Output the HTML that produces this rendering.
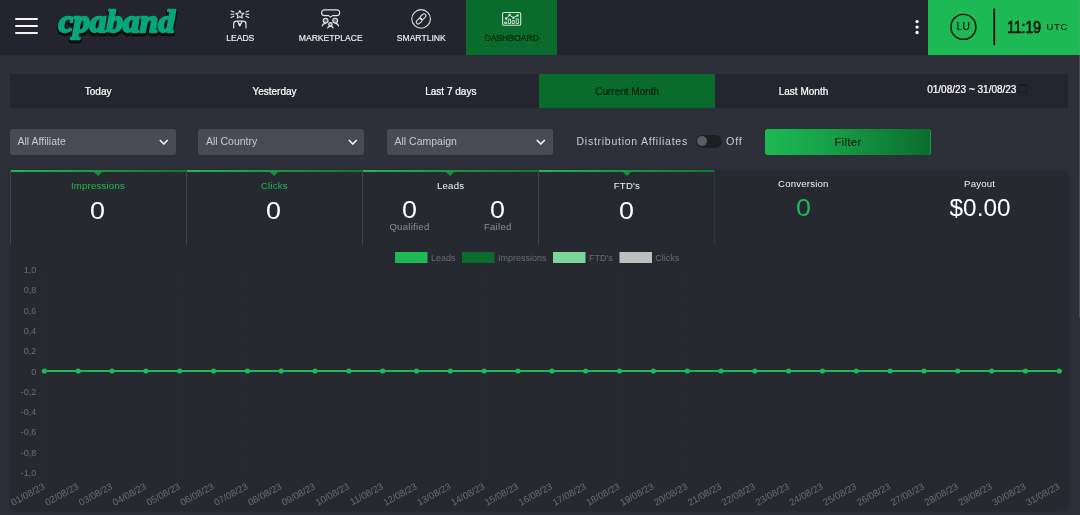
<!DOCTYPE html>
<html lang="en">
<head>
<meta charset="utf-8">
<title>cpaband - Dashboard</title>
<style>
*{box-sizing:border-box;margin:0;padding:0}
html,body{width:1080px;height:515px;overflow:hidden;background:#2e3039;font-family:"Liberation Sans",sans-serif;color:#fff}
#wrap{position:absolute;left:0;top:0;width:1080px;height:515px;overflow:hidden;will-change:transform}
#header{position:absolute;left:0;top:0;width:1080px;height:54.6px;background:#23242d}
.burger{position:absolute;left:15px;top:18px;width:23px;height:16px}
.burger i{position:absolute;left:0;width:23px;height:2px;background:#f2f2f2;border-radius:1px}
.logo{position:absolute;left:55px;top:1px;width:126px;height:50px;font-family:"Liberation Serif",serif;font-weight:bold;font-style:italic;font-size:34px;line-height:50px;color:#10a37f;letter-spacing:-0.5px;white-space:nowrap;-webkit-text-stroke:2.2px #10a37f;text-shadow:2px 2px 0 #0a0a0c,1px 1px 0 #0a0a0c}
.nav{position:absolute;top:0;height:54.6px;width:90.5px;text-align:center}
.nav svg{position:absolute;left:50%;top:8px;margin-left:-11px}
.nav span{position:absolute;left:-10px;right:-10px;top:32px;font-size:8.6px;line-height:12px;color:#f0f0f0;letter-spacing:0;-webkit-text-stroke:.15px currentColor}
.nav.act{background:#0a6c2c}
.nav.act span{color:#031c0a}
#user{position:absolute;left:928px;top:0;width:152px;height:54.6px;background:#1db954}
.av{position:absolute;left:22.2px;top:14.3px;width:26.6px;height:26.6px;font-size:10.3px;line-height:26.6px;letter-spacing:.3px;-webkit-text-stroke:.12px #0b0b0b;text-align:center;color:#0b0b0b}
.div{position:absolute;left:65.3px;top:8px;width:2px;height:37px;background:#0b0b0b}
.time{position:absolute;left:78.8px;top:14px;font-size:17.2px;line-height:26.6px;color:#0b0b0b;white-space:nowrap;letter-spacing:-.4px;-webkit-text-stroke:.45px #0b0b0b;transform:scaleX(.85);transform-origin:0 0}
.utc{position:absolute;left:118.6px;top:20px;font-size:9.6px;letter-spacing:.5px;line-height:14px;color:#0b0b0b;white-space:nowrap}
.dots{position:absolute;left:915px;top:20px;width:4px}
.dots i{display:block;width:3.4px;height:3.4px;border-radius:50%;background:#fff;margin-bottom:2px}

#tabs{position:absolute;left:10px;top:73.6px;width:1058px;height:34px;background:#24252e}
.tab{position:absolute;top:0;height:34px;width:176.33px;text-align:center;font-size:10px;line-height:35.2px;color:#fff;-webkit-text-stroke:.22px currentColor}
.tab.act{background:#0a6c2c;color:#03200c}

.sel{position:absolute;top:128.7px;height:26.3px;width:166px;background:#484b54;border-radius:3px;font-size:10.5px;line-height:25px;color:#c8c8cc;padding-left:7.5px}
.sel svg{position:absolute;right:6.8px;top:10.6px}
.lbl{position:absolute;left:576.5px;top:133px;font-size:10.5px;line-height:16px;color:#cbcbce;white-space:nowrap;letter-spacing:.74px}
.tog{position:absolute;left:696px;top:135px;width:26px;height:12.5px;border-radius:7px;background:#1d1e24}
.tog i{position:absolute;left:1px;top:1.2px;width:10px;height:10px;border-radius:50%;background:#5c5d63}
.off{position:absolute;left:726px;top:133px;font-size:10.8px;line-height:16px;color:#cbcbce;letter-spacing:.8px}
.btn{position:absolute;left:765px;top:129.2px;width:166px;height:25.8px;border-radius:3px;box-shadow:inset -1px 0 0 rgba(40,190,90,.55);background:linear-gradient(90deg,#1db954 0%,#17a348 35%,#0a6c2c 100%);text-align:center;font-size:10.6px;line-height:27.4px;color:#06200e;letter-spacing:.6px;-webkit-text-stroke:.15px #06200e}

#panel{position:absolute;left:9.8px;top:170px;width:1058.6px;height:339.6px;background:#272930;border-radius:5px;box-shadow:0 1px 5px rgba(0,0,0,.22)}
.card{position:absolute;top:0;height:75px;width:176.33px;text-align:center}
.card.g{border-top:2px solid #1db954}
.card.g:before{content:"";position:absolute;left:0;right:0;top:-2px;height:2px;background:linear-gradient(90deg,#1db954,#0c7a32)}
.card.g:after{content:"";position:absolute;left:50%;top:0;margin-left:-4.3px;border-left:4px solid transparent;border-right:4px solid transparent;border-top:4px solid #14913f}
.vl{position:absolute;top:0;width:1px;height:75px;background:#414247}
.ct{position:absolute;left:-20px;right:-20px;top:8.4px;font-size:9.6px;line-height:12px;color:#f2f2f2;letter-spacing:.2px;white-space:nowrap}
.cv{position:absolute;left:-20px;right:-20px;top:24px;font-size:23.2px;line-height:30px;color:#fff;white-space:nowrap}
.cv b{display:inline-block;font-weight:normal;transform:scaleX(1.16)}
.green{color:#1db954 !important}
.sub{position:absolute;font-size:9.6px;line-height:12px;color:#8d8e93;letter-spacing:.25px;white-space:nowrap;text-align:center}
</style>
</head>
<body>
<div id="wrap">
<div id="header">
  <div class="burger"><i style="top:0"></i><i style="top:6.8px"></i><i style="top:13.7px"></i></div>
  <svg class="logosvg" width="200" height="55" viewBox="0 0 200 55" style="position:absolute;left:0;top:0"><g font-family="Liberation Serif, serif" font-weight="bold" font-style="italic" font-size="28" stroke-linejoin="round" stroke-linecap="round" transform="translate(0 32.300) scale(1 1.130) translate(0 -32.300)"><text x="58.400" y="34" fill="#0b0b0d" stroke="#0b0b0d" stroke-width="3.800" textLength="116.500" lengthAdjust="spacingAndGlyphs">cpaband</text><text x="58.400" y="32.200" fill="#05a77a" stroke="#05a77a" stroke-width="2" textLength="116.500" lengthAdjust="spacingAndGlyphs">cpaband</text></g></svg>
  <div class="nav" style="left:195px">
    <span>LEADS</span></div>
  <div class="nav" style="left:285.5px">
    <span>MARKETPLACE</span></div>
  <div class="nav" style="left:376px">
    <span>SMARTLINK</span></div>
  <div class="nav act" style="left:466.3px;width:90.7px">
    <span>DASHBOARD</span></div>
<svg id="icons" width="1080" height="55" viewBox="0 0 1080 55" style="position:absolute;left:0;top:0" fill="none" stroke="#ededed" stroke-width="1.300" stroke-linecap="round" stroke-linejoin="round">
<g fill="#fff" stroke="none"><circle cx="917.100" cy="21.600" r="1.650"/><circle cx="917.100" cy="27.100" r="1.650"/><circle cx="917.100" cy="32.500" r="1.650"/></g>
<!-- leads -->
<g stroke-width="1.150" stroke="#e4e4e4">
<path d="M239.800 10.500l1.250 2.450 2.700.4-1.950 1.900.45 2.700-2.450-1.250-2.450 1.250.45-2.700-1.950-1.900 2.700-.4z"/>
<path d="M231.200 10.900l2.600 1.200M231 14.200h2.900M231.200 17.500l2.600-1.200M248.600 10.900l-2.600 1.200M248.800 14.200h-2.900M248.600 17.500l-2.600-1.200"/>
<path d="M233.700 27.900v-4c0-1.700 1.300-2.700 3-2.700h6.300c1.700 0 3 1 3 2.700v4"/>
<path d="M237.700 21.400l2.150 4.500 2.250-4.500" />
<path d="M239 23.800h1.700l-.85 2z" fill="#e4e4e4" stroke-width="0.800"/>
</g>
<!-- marketplace -->
<g stroke-width="1.150" stroke="#e4e4e4">
<path d="M324.500 9.800h12.300a2.900 2.900 0 0 1 0 5.800h-4.300l-2 1.500-2-1.500h-4a2.900 2.900 0 0 1 0-5.800z"/>
<circle cx="325.600" cy="20.600" r="2.400" fill="#e4e4e4" fill-opacity=".35"/><circle cx="335.200" cy="20.600" r="2.400" fill="#e4e4e4" fill-opacity=".35"/><circle cx="330.400" cy="24.300" r="1.700" fill="#e4e4e4" fill-opacity=".35"/>
<path d="M322.200 26c.5-1.700 1.700-2.700 3.400-2.700M338.600 26c-.5-1.700-1.700-2.700-3.400-2.700M327.600 28c.5-1.300 1.500-1.900 2.800-1.900s2.300.6 2.800 1.900" />
</g>
<!-- smartlink -->
<g stroke-width="1.100" stroke="#dedede">
<circle cx="421.100" cy="18.900" r="9.300"/>
<rect x="415.900" y="19.200" width="6.600" height="3.800" rx="1.900" transform="rotate(-43 419.200 21.100)"/>
<rect x="419.700" y="14.800" width="6.600" height="3.800" rx="1.900" transform="rotate(-43 423 16.700)"/>
</g>
<!-- dashboard -->
<g stroke="#d4e8d9" stroke-width="1.100">
<rect x="502.600" y="12.500" width="18.100" height="12.700" rx="1.300"/>
<path d="M506.100 18.600l3.500-3.500 3.800 2.700 4.100-2.400" stroke-width="1"/>
<path d="M505 22h1.700v1.500H505zM508.700 19.200h1.800v4.300h-1.800zM512.500 20.600h1.800v2.900h-1.800zM516.600 18.900h1.800v4.600h-1.800z" stroke-width=".9"/>
<circle cx="506.100" cy="18.600" r=".7" fill="#d4e8d9"/><circle cx="509.600" cy="15.100" r=".7" fill="#d4e8d9"/><circle cx="513.400" cy="17.800" r=".7" fill="#d4e8d9"/><circle cx="517.500" cy="15.400" r=".7" fill="#d4e8d9"/>
</g>
</svg>
  
  <div id="user"><svg width="152" height="55" viewBox="928 0 152 55" style="position:absolute;left:0;top:0"><circle cx="963.400" cy="26.900" r="12.500" fill="none" stroke="#0b0b0b" stroke-width="1.400"/><rect x="993.400" y="8.600" width="1.700" height="36.700" rx=".8" fill="#0b0b0b"/></svg><div class="av">LU</div><div class="time">11:19</div><div class="utc">UTC</div></div>
</div>

<div id="tabs">
  <div class="tab" style="left:0">Today</div>
  <div class="tab" style="left:176.330px">Yesterday</div>
  <div class="tab" style="left:352.670px">Last 7 days</div>
  <div class="tab act" style="left:529px">Current Month</div>
  <div class="tab" style="left:705.330px">Last Month</div>
  <div class="tab" style="left:881.670px;top:-1.600px"><span style="position:relative;left:-8px">01/08/23 ~ 31/08/23</span><i style="position:absolute;left:126px;top:11.500px;width:9.500px;height:9.500px;border:1px solid #1b1c22;border-top-width:2px;border-radius:1px"></i></div>
</div>

<div class="sel" style="left:10px">All Affiliate<svg width="10" height="8" viewBox="0 0 10 8"><path d="M1.300 1.500l3.500 3.500 3.500-3.500" fill="none" stroke="#f6f6f6" stroke-width="1.700" stroke-linecap="round" stroke-linejoin="round"/></svg></div>
<div class="sel" style="left:198.400px">All Country<svg width="10" height="8" viewBox="0 0 10 8"><path d="M1.300 1.500l3.500 3.500 3.500-3.500" fill="none" stroke="#f6f6f6" stroke-width="1.700" stroke-linecap="round" stroke-linejoin="round"/></svg></div>
<div class="sel" style="left:387px">All Campaign<svg width="10" height="8" viewBox="0 0 10 8"><path d="M1.300 1.500l3.500 3.500 3.500-3.500" fill="none" stroke="#f6f6f6" stroke-width="1.700" stroke-linecap="round" stroke-linejoin="round"/></svg></div>
<div class="lbl">Distribution Affiliates</div>
<div class="tog"><i></i></div>
<div class="off">Off</div>
<div class="btn">Filter</div>

<div id="panel">
  <div class="card g" style="left:0"><div class="ct green">Impressions</div><div class="cv" style="top:24px;margin-left:-1.400px"><b>0</b></div></div>
  <div class="card g" style="left:176.330px"><div class="ct green">Clicks</div><div class="cv" style="top:24px;margin-left:-1.400px"><b>0</b></div></div>
  <div class="card g" style="left:352.670px"><div class="ct">Leads</div>
    <div class="cv" style="left:0;right:auto;width:94px;top:22.600px;margin-left:.400px"><b>0</b></div><div class="cv" style="left:87.500px;right:auto;width:94px;top:22.600px;margin-left:.400px"><b>0</b></div>
    <div class="sub" style="left:0;width:94px;top:49px">Qualified</div><div class="sub" style="left:88.300px;width:94px;top:49px">Failed</div></div>
  <div class="card g" style="left:529px"><div class="ct">FTD's</div><div class="cv" style="top:24px;margin-left:-1.400px"><b>0</b></div></div>
  <div class="card" style="left:705.330px"><div class="ct" style="top:7.500px">Conversion</div><div class="cv green" style="top:22.500px"><b>0</b></div></div>
  <div class="card" style="left:881.670px"><div class="ct" style="top:7.500px">Payout</div><div class="cv" style="top:22.500px"><b style="transform:scaleX(1.05)">$0.00</b></div></div>
  <div class="vl" style="left:0"></div><div class="vl" style="left:175.800px"></div><div class="vl" style="left:352.200px"></div><div class="vl" style="left:528.500px"></div><div class="vl" style="left:704.600px;background:#36373d"></div>
  <!--CHART--><!--/CHART--><!--/CHART--><!--/CHART--><!--/CHART--><!--/CHART-->
</div>
<div id="sb" style="position:absolute;left:1079px;top:0;width:1px;height:318px;background:rgba(140,140,150,.32);border-radius:0 0 1px 1px"></div>
<!--CSVG--><svg id="chart" width="1080" height="515" viewBox="0 0 1080 515" style="position:absolute;left:0;top:0" font-family="Liberation Sans, sans-serif" font-size="9.6" fill="#6c6c6f">
<rect x="395" y="252" width="32.5" height="11" fill="#1db954"/>
<text transform="translate(431 260.7) scale(0.94 1)">Leads</text>
<rect x="462" y="252" width="32.5" height="11" fill="#0a6c2c"/>
<text transform="translate(498 260.7) scale(0.94 1)">Impressions</text>
<rect x="553" y="252" width="32.5" height="11" fill="#7cd69a"/>
<text transform="translate(589 260.7) scale(0.94 1)">FTD's</text>
<rect x="619.5" y="252" width="32.5" height="11" fill="#bfbfbf"/>
<text transform="translate(655.3 260.7) scale(0.94 1)">Clicks</text>
<path d="M44.40 269.50V480.00M78.23 269.50V480.00M112.06 269.50V480.00M145.89 269.50V480.00M179.72 269.50V480.00M213.55 269.50V480.00M247.38 269.50V480.00M281.21 269.50V480.00M315.04 269.50V480.00M348.87 269.50V480.00M382.70 269.50V480.00M416.53 269.50V480.00M450.36 269.50V480.00M484.19 269.50V480.00M518.02 269.50V480.00M551.85 269.50V480.00M585.68 269.50V480.00M619.51 269.50V480.00M653.34 269.50V480.00M687.17 269.50V480.00M721.00 269.50V480.00M754.83 269.50V480.00M788.66 269.50V480.00M822.49 269.50V480.00M856.32 269.50V480.00M890.15 269.50V480.00M923.98 269.50V480.00M957.81 269.50V480.00M991.64 269.50V480.00M1025.47 269.50V480.00M1059.30 269.50V480.00M36.90 269.50H1059.30M36.90 289.80H1059.30M36.90 310.10H1059.30M36.90 330.40H1059.30M36.90 350.70H1059.30M36.90 371.00H1059.30M36.90 391.30H1059.30M36.90 411.60H1059.30M36.90 431.90H1059.30M36.90 452.20H1059.30M36.90 472.50H1059.30" stroke="#000" stroke-opacity="0.05" stroke-width="1" fill="none"/>
<text text-anchor="end" transform="translate(36.2 273.00) scale(0.94 1)">1,0</text>
<text text-anchor="end" transform="translate(36.2 293.30) scale(0.94 1)">0,8</text>
<text text-anchor="end" transform="translate(36.2 313.60) scale(0.94 1)">0,6</text>
<text text-anchor="end" transform="translate(36.2 333.90) scale(0.94 1)">0,4</text>
<text text-anchor="end" transform="translate(36.2 354.20) scale(0.94 1)">0,2</text>
<text text-anchor="end" transform="translate(36.2 374.50) scale(0.94 1)">0</text>
<text text-anchor="end" transform="translate(36.2 394.80) scale(0.94 1)">-0,2</text>
<text text-anchor="end" transform="translate(36.2 415.10) scale(0.94 1)">-0,4</text>
<text text-anchor="end" transform="translate(36.2 435.40) scale(0.94 1)">-0,6</text>
<text text-anchor="end" transform="translate(36.2 455.70) scale(0.94 1)">-0,8</text>
<text text-anchor="end" transform="translate(36.2 476.00) scale(0.94 1)">-1,0</text>
<text text-anchor="end" transform="translate(42.20 482.30) rotate(-28.5) scale(0.98 1)" x="0" y="7">01/08/23</text>
<text text-anchor="end" transform="translate(76.03 482.30) rotate(-28.5) scale(0.98 1)" x="0" y="7">02/08/23</text>
<text text-anchor="end" transform="translate(109.86 482.30) rotate(-28.5) scale(0.98 1)" x="0" y="7">03/08/23</text>
<text text-anchor="end" transform="translate(143.69 482.30) rotate(-28.5) scale(0.98 1)" x="0" y="7">04/08/23</text>
<text text-anchor="end" transform="translate(177.52 482.30) rotate(-28.5) scale(0.98 1)" x="0" y="7">05/08/23</text>
<text text-anchor="end" transform="translate(211.35 482.30) rotate(-28.5) scale(0.98 1)" x="0" y="7">06/08/23</text>
<text text-anchor="end" transform="translate(245.18 482.30) rotate(-28.5) scale(0.98 1)" x="0" y="7">07/08/23</text>
<text text-anchor="end" transform="translate(279.01 482.30) rotate(-28.5) scale(0.98 1)" x="0" y="7">08/08/23</text>
<text text-anchor="end" transform="translate(312.84 482.30) rotate(-28.5) scale(0.98 1)" x="0" y="7">09/08/23</text>
<text text-anchor="end" transform="translate(346.67 482.30) rotate(-28.5) scale(0.98 1)" x="0" y="7">10/08/23</text>
<text text-anchor="end" transform="translate(380.50 482.30) rotate(-28.5) scale(0.98 1)" x="0" y="7">11/08/23</text>
<text text-anchor="end" transform="translate(414.33 482.30) rotate(-28.5) scale(0.98 1)" x="0" y="7">12/08/23</text>
<text text-anchor="end" transform="translate(448.16 482.30) rotate(-28.5) scale(0.98 1)" x="0" y="7">13/08/23</text>
<text text-anchor="end" transform="translate(481.99 482.30) rotate(-28.5) scale(0.98 1)" x="0" y="7">14/08/23</text>
<text text-anchor="end" transform="translate(515.82 482.30) rotate(-28.5) scale(0.98 1)" x="0" y="7">15/08/23</text>
<text text-anchor="end" transform="translate(549.65 482.30) rotate(-28.5) scale(0.98 1)" x="0" y="7">16/08/23</text>
<text text-anchor="end" transform="translate(583.48 482.30) rotate(-28.5) scale(0.98 1)" x="0" y="7">17/08/23</text>
<text text-anchor="end" transform="translate(617.31 482.30) rotate(-28.5) scale(0.98 1)" x="0" y="7">18/08/23</text>
<text text-anchor="end" transform="translate(651.14 482.30) rotate(-28.5) scale(0.98 1)" x="0" y="7">19/08/23</text>
<text text-anchor="end" transform="translate(684.97 482.30) rotate(-28.5) scale(0.98 1)" x="0" y="7">20/08/23</text>
<text text-anchor="end" transform="translate(718.80 482.30) rotate(-28.5) scale(0.98 1)" x="0" y="7">21/08/23</text>
<text text-anchor="end" transform="translate(752.63 482.30) rotate(-28.5) scale(0.98 1)" x="0" y="7">22/08/23</text>
<text text-anchor="end" transform="translate(786.46 482.30) rotate(-28.5) scale(0.98 1)" x="0" y="7">23/08/23</text>
<text text-anchor="end" transform="translate(820.29 482.30) rotate(-28.5) scale(0.98 1)" x="0" y="7">24/08/23</text>
<text text-anchor="end" transform="translate(854.12 482.30) rotate(-28.5) scale(0.98 1)" x="0" y="7">25/08/23</text>
<text text-anchor="end" transform="translate(887.95 482.30) rotate(-28.5) scale(0.98 1)" x="0" y="7">26/08/23</text>
<text text-anchor="end" transform="translate(921.78 482.30) rotate(-28.5) scale(0.98 1)" x="0" y="7">27/08/23</text>
<text text-anchor="end" transform="translate(955.61 482.30) rotate(-28.5) scale(0.98 1)" x="0" y="7">28/08/23</text>
<text text-anchor="end" transform="translate(989.44 482.30) rotate(-28.5) scale(0.98 1)" x="0" y="7">29/08/23</text>
<text text-anchor="end" transform="translate(1023.27 482.30) rotate(-28.5) scale(0.98 1)" x="0" y="7">30/08/23</text>
<text text-anchor="end" transform="translate(1057.10 482.30) rotate(-28.5) scale(0.98 1)" x="0" y="7">31/08/23</text>
<path d="M44.40 371.00H1059.30" stroke="#1db954" stroke-width="2.1" fill="none"/>
<circle cx="44.40" cy="371.00" r="2.6" fill="#1db954"/>
<circle cx="78.23" cy="371.00" r="2.6" fill="#1db954"/>
<circle cx="112.06" cy="371.00" r="2.6" fill="#1db954"/>
<circle cx="145.89" cy="371.00" r="2.6" fill="#1db954"/>
<circle cx="179.72" cy="371.00" r="2.6" fill="#1db954"/>
<circle cx="213.55" cy="371.00" r="2.6" fill="#1db954"/>
<circle cx="247.38" cy="371.00" r="2.6" fill="#1db954"/>
<circle cx="281.21" cy="371.00" r="2.6" fill="#1db954"/>
<circle cx="315.04" cy="371.00" r="2.6" fill="#1db954"/>
<circle cx="348.87" cy="371.00" r="2.6" fill="#1db954"/>
<circle cx="382.70" cy="371.00" r="2.6" fill="#1db954"/>
<circle cx="416.53" cy="371.00" r="2.6" fill="#1db954"/>
<circle cx="450.36" cy="371.00" r="2.6" fill="#1db954"/>
<circle cx="484.19" cy="371.00" r="2.6" fill="#1db954"/>
<circle cx="518.02" cy="371.00" r="2.6" fill="#1db954"/>
<circle cx="551.85" cy="371.00" r="2.6" fill="#1db954"/>
<circle cx="585.68" cy="371.00" r="2.6" fill="#1db954"/>
<circle cx="619.51" cy="371.00" r="2.6" fill="#1db954"/>
<circle cx="653.34" cy="371.00" r="2.6" fill="#1db954"/>
<circle cx="687.17" cy="371.00" r="2.6" fill="#1db954"/>
<circle cx="721.00" cy="371.00" r="2.6" fill="#1db954"/>
<circle cx="754.83" cy="371.00" r="2.6" fill="#1db954"/>
<circle cx="788.66" cy="371.00" r="2.6" fill="#1db954"/>
<circle cx="822.49" cy="371.00" r="2.6" fill="#1db954"/>
<circle cx="856.32" cy="371.00" r="2.6" fill="#1db954"/>
<circle cx="890.15" cy="371.00" r="2.6" fill="#1db954"/>
<circle cx="923.98" cy="371.00" r="2.6" fill="#1db954"/>
<circle cx="957.81" cy="371.00" r="2.6" fill="#1db954"/>
<circle cx="991.64" cy="371.00" r="2.6" fill="#1db954"/>
<circle cx="1025.47" cy="371.00" r="2.6" fill="#1db954"/>
<circle cx="1059.30" cy="371.00" r="2.6" fill="#1db954"/>
</svg><!--/CSVG-->
</div>
</body>
</html>
